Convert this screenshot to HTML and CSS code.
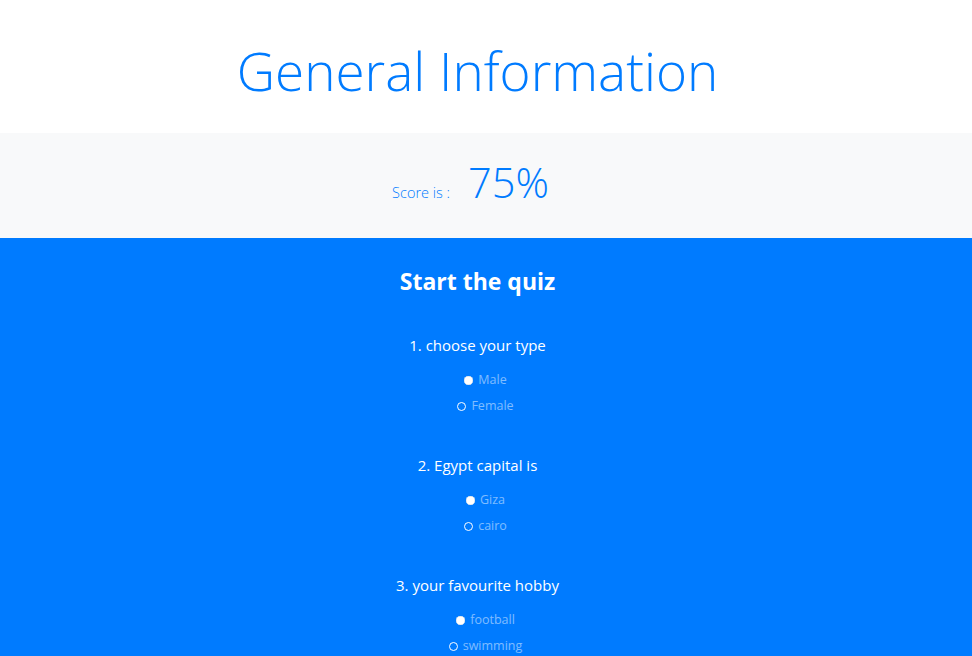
FILE: index.html
```html
<!DOCTYPE html>
<html lang="en">
<head>
<meta charset="utf-8">
<title>General Information</title>
<link rel="stylesheet" href="styles.css">
</head>
<body>
<header class="hero">
  <div class="wrap">
    <h1 class="title">General Information</h1>
  </div>
</header>
<section class="score">
  <div class="wrap score-row">
    <span class="score-label">Score is :</span>
    <span class="score-value">75%</span>
  </div>
</section>
<section class="quiz">
  <div class="wrap">
    <h2 class="quiz-title">Start the quiz</h2>
    <form class="questions">
      <div class="question">
        <p class="q-title">1. choose your type</p>
        <label class="option"><span class="radio filled"></span><span class="opt-text">Male</span></label>
        <label class="option"><span class="radio ring"></span><span class="opt-text">Female</span></label>
      </div>
      <div class="question">
        <p class="q-title">2. Egypt capital is</p>
        <label class="option"><span class="radio filled"></span><span class="opt-text">Giza</span></label>
        <label class="option"><span class="radio ring"></span><span class="opt-text">cairo</span></label>
      </div>
      <div class="question">
        <p class="q-title">3. your favourite hobby</p>
        <label class="option"><span class="radio filled"></span><span class="opt-text">football</span></label>
        <label class="option"><span class="radio ring"></span><span class="opt-text">swimming</span></label>
      </div>
    </form>
  </div>
</section>
</body>
</html>
```
FILE: styles.css
```css
* { box-sizing: border-box; }
html, body { margin: 0; padding: 0; }
body {
  font-family: "Open Sans", "Noto Sans", sans-serif;
  color: #212529;
  background: #fff;
}
.wrap { width: 955px; }

.hero { height: 133px; display: flex; align-items: flex-start; }
.title {
  margin: 0;
  padding-top: 31px;
  text-align: center;
  color: #007bff;
  font-weight: 300;
  font-size: 53px;
  line-height: 80px;
}

.score { background: #f8f9fa; height: 105px; }
.score-row {
  display: flex;
  justify-content: center;
  align-items: baseline;
  gap: 18px;
  padding-top: 13px;
  padding-right: 14px;
}
.score-label { color: #007bff; font-weight: 300; font-size: 14.5px; }
.score-value { color: #007bff; font-weight: 300; font-size: 41.5px; line-height: 72px; }

.quiz { background: #007bff; min-height: 418px; padding-top: 27px; }
.quiz-title {
  margin: 0;
  text-align: center;
  color: #fff;
  font-weight: 700;
  font-size: 23px;
  line-height: 32px;
}
.questions { display: flex; flex-direction: column; gap: 34px; padding-top: 36px; }
.question { display: flex; flex-direction: column; }
.q-title {
  margin: 0 0 10px;
  text-align: center;
  color: #fff;
  font-size: 15px;
  line-height: 24px;
}
.option {
  display: flex;
  justify-content: center;
  align-items: center;
  gap: 5px;
  height: 26px;
  padding-left: 16px;
}
.radio {
  width: 9px;
  height: 9px;
  border-radius: 50%;
  flex: none;
}
.radio.filled { background: #fff; box-shadow: 0 0 0 0.5px #c9d6e6 inset; }
.radio.ring { border: 1.6px solid #fff; background: #007bff; }
.opt-text { color: rgba(255,255,255,.5); font-size: 12.5px; line-height: 18px; }
```
